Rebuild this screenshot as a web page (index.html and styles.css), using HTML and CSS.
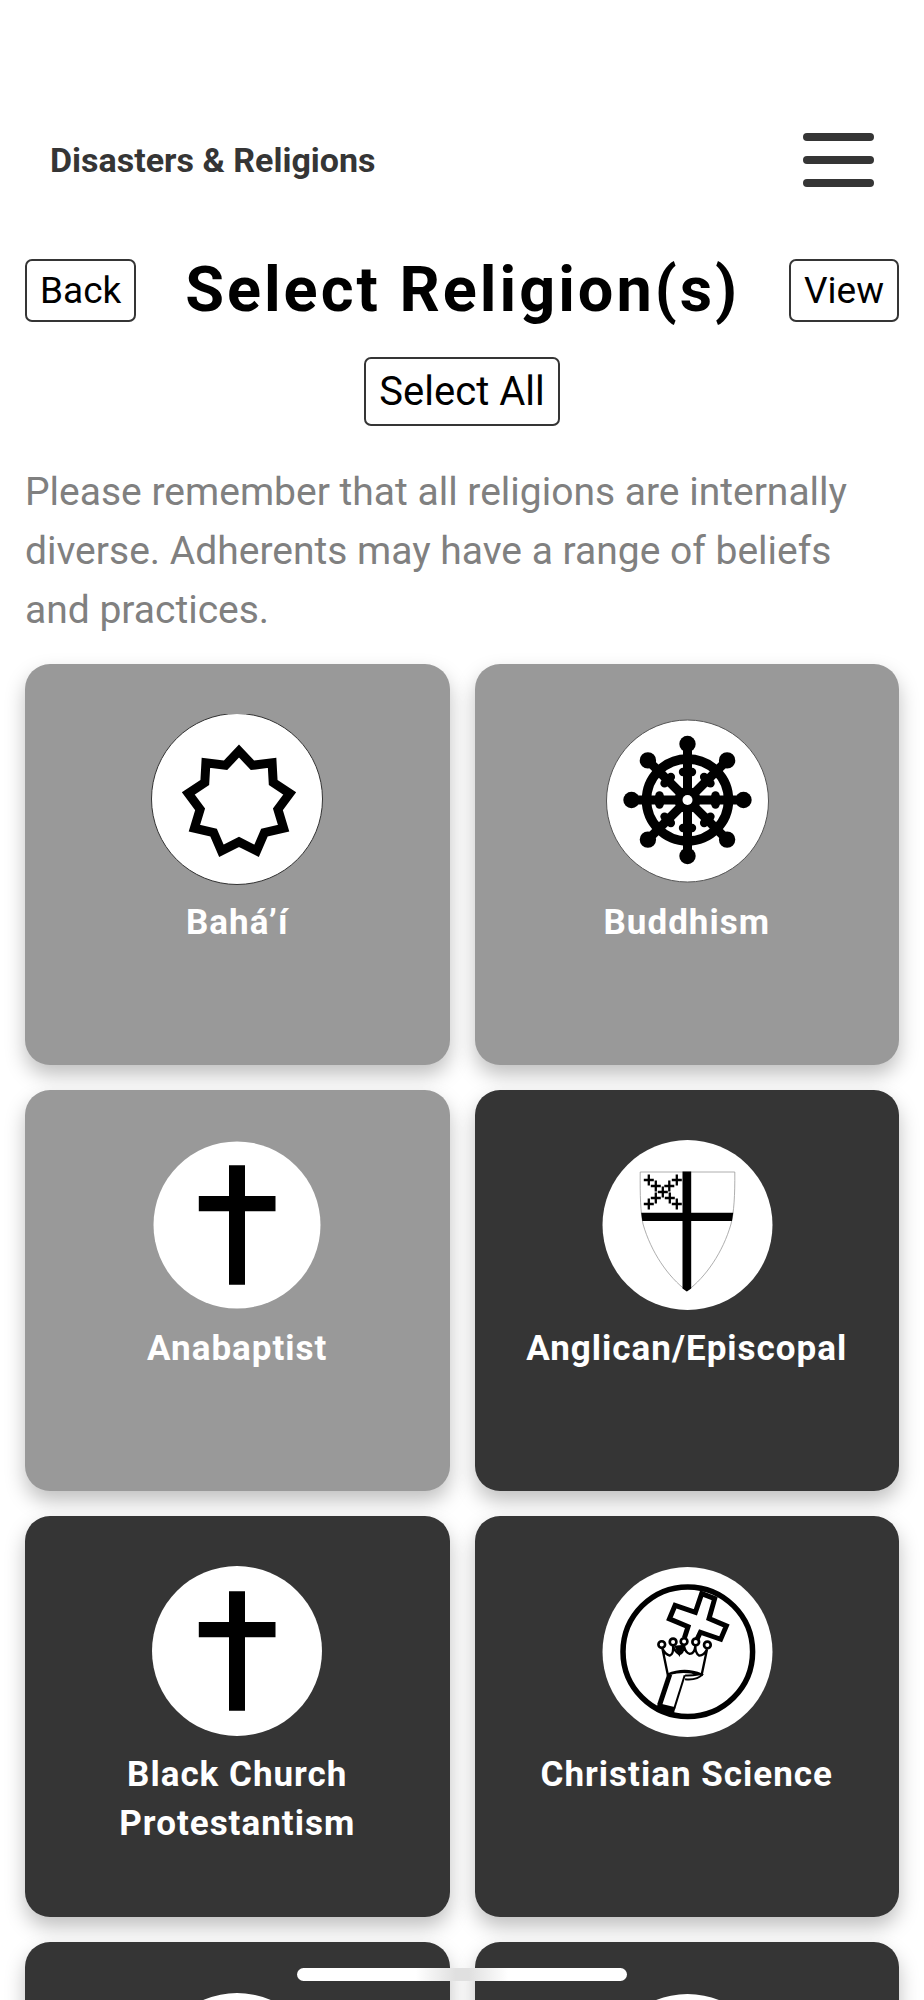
FILE: index.html
```html
<!DOCTYPE html>
<html lang="en">
<head>
    <meta charset="UTF-8">
    <meta name="viewport" content="width=device-width, initial-scale=1.0">
    <title>Disasters &amp; Religions</title>
    <link rel="stylesheet" href="styles.css">
</head>
<body>
    <header class="navbar">
        <a class="brand" href="#">Disasters &amp; Religions</a>
        <button class="menu" type="button" aria-label="Menu">
            <span class="bar"></span>
            <span class="bar"></span>
            <span class="bar"></span>
        </button>
    </header>

    <main class="content">
        <div class="title-row">
            <button class="btn" type="button">Back</button>
            <h1>Select Religion(s)</h1>
            <button class="btn" type="button">View</button>
        </div>

        <div class="select-row">
            <button class="btn btn-large" type="button">Select All</button>
        </div>

        <p class="note">Please remember that all religions are internally diverse. Adherents may have a range of beliefs and practices.</p>

        <!-- Religion cards -->
        <div class="grid">
            <button class="card selected" type="button">
                <svg class="icon" viewBox="0 0 172 172">
                    <circle cx="86" cy="85" r="85.5" fill="#fff" stroke="#333" stroke-width="1"/>
                    <path d="M88 37 101.500 51.300 121.100 48.900 122.200 68.600 138.700 79.500 126.900 95.300 132.600 114.200 113.400 118.700 105.600 136.800 88 127.900 70.400 136.800 62.600 118.700 43.400 114.200 49.100 95.300 37.300 79.500 53.800 68.600 54.900 48.900 74.500 51.300Z" fill="none" stroke="#000" stroke-width="9"/>
                </svg>
                <span class="name">Bahá’í</span>
            </button>

            <button class="card selected" type="button">
                <svg class="icon" viewBox="0 0 172 172">
                    <defs>
                        <g id="spoke">
                            <path d="M86.500 86V31" stroke="#000" stroke-width="9"/>
                            <circle cx="86.500" cy="30" r="8.200"/>
                            <circle cx="86.500" cy="58" r="6"/>
                            <circle cx="82" cy="58" r="4.200"/>
                            <circle cx="91" cy="58" r="4.200"/>
                        </g>
                    </defs>
                    <circle cx="86.500" cy="87" r="81" fill="#fff" stroke="#555" stroke-width="1"/>
                    <circle cx="86.500" cy="86" r="41" fill="none" stroke="#000" stroke-width="9.500"/>
                    <use href="#spoke"/>
                    <use href="#spoke" transform="rotate(45 86.500 86)"/>
                    <use href="#spoke" transform="rotate(90 86.500 86)"/>
                    <use href="#spoke" transform="rotate(135 86.500 86)"/>
                    <use href="#spoke" transform="rotate(180 86.500 86)"/>
                    <use href="#spoke" transform="rotate(225 86.500 86)"/>
                    <use href="#spoke" transform="rotate(270 86.500 86)"/>
                    <use href="#spoke" transform="rotate(315 86.500 86)"/>
                    <circle cx="86.500" cy="86" r="13"/>
                    <circle cx="86.500" cy="86" r="5" fill="#fff"/>
                </svg>
                <span class="name">Buddhism</span>
            </button>

            <button class="card selected" type="button">
                <svg class="icon" viewBox="0 0 172 172">
                    <circle cx="86" cy="85" r="83.500" fill="#fff"/>
                    <path d="M78 25.300h16V56h30.500v15.300H94v73.400H78V71.300H47.800V56H78Z"/>
                </svg>
                <span class="name">Anabaptist</span>
            </button>

            <button class="card" type="button">
                <svg class="icon" viewBox="0 0 172 172">
                    <circle cx="86.500" cy="85" r="85" fill="#fff"/>
                    <path d="M39.200 32H133.800C134 55 133 72 130 84C122 112 105 137 86 151C67 137 50 112 42 84C39.500 72 39 55 39.200 32Z" fill="none" stroke="#999" stroke-width="0.800"/>
                    <path d="M81.500 31.500h8.700V148.500L85.800 151.500 81.500 148.500ZM40.200 72.700H132.200L131 81H41.300Z"/>
                    <path d="M47.800 34.500v11M42.800 40h10M54.800 40.500v11M49.800 46h10M61.800 46.500v11M56.800 52h10M68.800 52.500v11M63.800 58h10M75.800 58.500v11M70.800 64h10M75.800 34.500v11M70.800 40h10M68.300 40.500v11M63.300 46h10M54.800 52.500v11M49.800 58h10M47.800 58.500v11M42.800 64h10" stroke="#000" stroke-width="2.300"/>
                </svg>
                <span class="name">Anglican/Episcopal</span>
            </button>

            <button class="card" type="button">
                <svg class="icon" viewBox="0 0 172 172">
                    <circle cx="86" cy="85" r="85" fill="#fff"/>
                    <path d="M78 25.300h16V56h30.500v15.300H94v73.400H78V71.300H47.800V56H78Z"/>
                </svg>
                <span class="name">Black Church Protestantism</span>
            </button>

            <button class="card" type="button">
                <svg class="icon" viewBox="0 0 172 172">
                    <circle cx="86.500" cy="86" r="85" fill="#fff"/>
                    <circle cx="86.800" cy="85.700" r="64.800" fill="none" stroke="#000" stroke-width="5.500"/>
                    <g transform="translate(-20.500 -16) scale(0.333)" fill="none" stroke="#000" stroke-width="6">
                        <!-- cross -->
                        <path d="M350 268 360 247 421 268 438 228 386 206 403 146 364 131 345 187 284 166 267 207 323 230 312 264" stroke-width="15"/>
                        <!-- crown -->
                        <path d="M246 296 262 374Q312 352 364 374L380 298Q370 318 356 317Q344 310 345 288Q342 312 328 312Q314 308 311 288Q308 312 296 312Q282 304 278 288Q280 314 268 317Q254 314 246 296Z" fill="#fff" stroke-width="7"/>
                        <path d="M286 290 297 314 308 288Z" fill="#000"/>
                        <g fill="#fff" stroke-width="8">
                            <circle cx="244" cy="284" r="10"/>
                            <circle cx="278" cy="276" r="10"/>
                            <circle cx="311" cy="275" r="10"/>
                            <circle cx="346" cy="276" r="10"/>
                            <circle cx="381" cy="285" r="10"/>
                        </g>
                        <path d="M268 372Q315 360 354 374Q334 378 314 377M368 372Q350 392 314 388"/>
                        <!-- arm -->
                        <path d="M268 374 238 464" stroke-width="15"/>
                        <path d="M230 468 283 481" stroke-width="18"/>
                        <path d="M313 376 281 478"/>
                    </g>
                </svg>
                <span class="name">Christian Science</span>
            </button>

            <button class="card" type="button" aria-label="Religion">
                <svg class="icon" viewBox="0 0 172 172">
                    <circle cx="86" cy="86" r="85" fill="#fff"/>
                </svg>
            </button>

            <button class="card" type="button" aria-label="Religion">
                <svg class="icon" viewBox="0 0 172 172">
                    <circle cx="86.500" cy="87" r="85" fill="#fff"/>
                </svg>
            </button>
        </div>
    </main>

    <div class="home-indicator"></div>
</body>
</html>
```
FILE: styles.css
```css
* {
    box-sizing: border-box;
}

body {
    font-family: Roboto, "Liberation Sans", sans-serif;
    background-color: #fff;
    color: #000;
    margin: 0;
    height: 100vh;
    overflow: hidden;
}

button {
    font-family: inherit;
    cursor: pointer;
}

.navbar {
    display: flex;
    justify-content: space-between;
    align-items: center;
    padding: 133px 50px 71px;
}

.brand {
    color: #353535;
    font-size: 34px;
    font-weight: bold;
    line-height: 40px;
    text-decoration: none;
}

.menu {
    display: flex;
    flex-direction: column;
    gap: 15px;
    width: 71px;
    padding: 0;
    border: none;
    background: none;
}

.bar {
    height: 8px;
    border-radius: 4px;
    background-color: #353535;
}

.content {
    padding: 0 25px;
}

.title-row {
    display: flex;
    justify-content: space-between;
    align-items: center;
}

h1 {
    margin: 0;
    font-size: 63px;
    line-height: 64px;
    letter-spacing: 3px;
}

.btn {
    padding: 8px 13px;
    border: 2px solid #353535;
    border-radius: 7px;
    background-color: #fff;
    color: #000;
    font-size: 37px;
    line-height: 43px;
}

.btn-large {
    font-size: 40px;
    line-height: 49px;
}

.select-row {
    display: flex;
    justify-content: center;
    margin-top: 35px;
}

.note {
    margin: 37px 0 24px;
    color: #808080;
    font-size: 39px;
    line-height: 59px;
}

.grid {
    display: grid;
    grid-template-columns: 1fr 1fr;
    gap: 25px;
}

.card {
    display: flex;
    flex-direction: column;
    align-items: center;
    justify-content: flex-start;
    gap: 12px;
    min-height: 401px;
    padding: 50px 24px 24px;
    border: none;
    border-radius: 25px;
    background-color: #353535;
    color: #fff;
    box-shadow: 0 10px 20px rgba(0, 0, 0, 0.25);
}

.card.selected {
    background-color: #999;
}

.icon {
    width: 172px;
    height: 172px;
    flex-shrink: 0;
}

.name {
    max-width: 330px;
    font-size: 35px;
    font-weight: bold;
    line-height: 49px;
    letter-spacing: 1px;
}

.home-indicator {
    position: fixed;
    bottom: 19px;
    left: 50%;
    width: 330px;
    height: 13px;
    margin-left: -165px;
    border-radius: 7px;
    background: linear-gradient(to right, #fff 36%, #e0e0e0 48%, #e0e0e0 52%, #fff 64%);
}
```
